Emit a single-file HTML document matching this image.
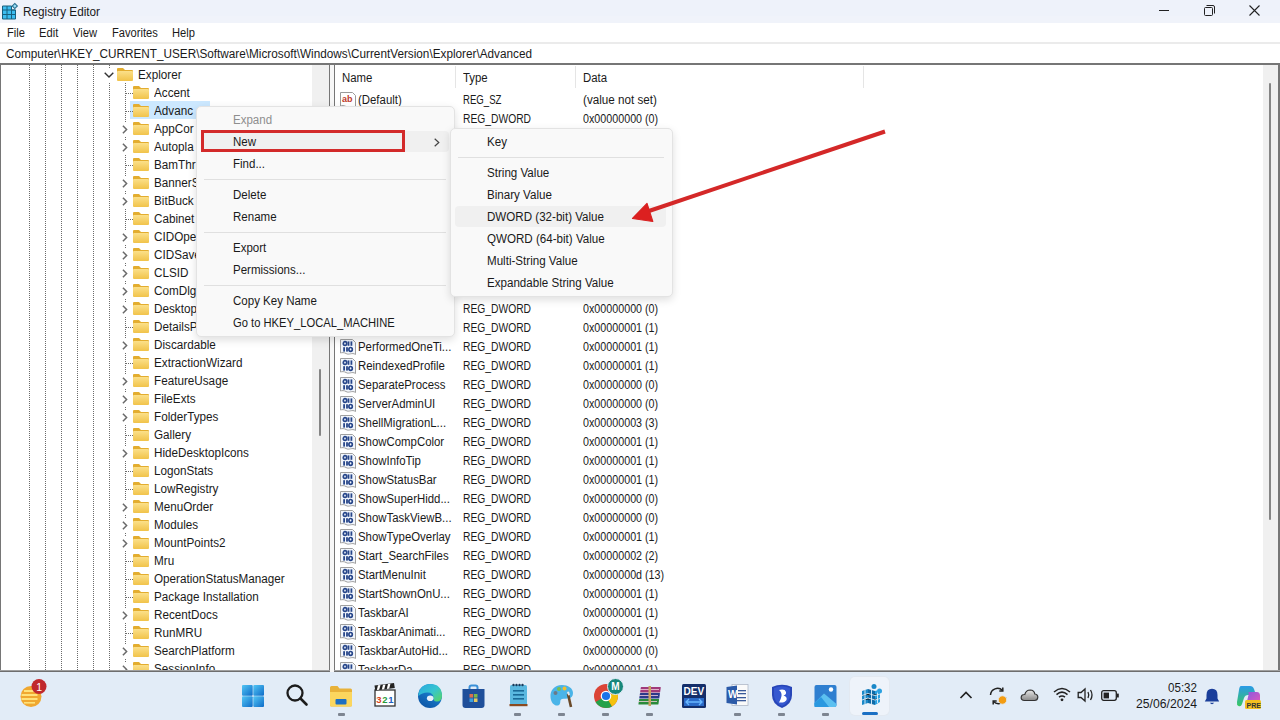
<!DOCTYPE html><html><head><meta charset="utf-8"><style>
html,body{margin:0;padding:0;}
body{width:1280px;height:720px;overflow:hidden;position:relative;background:#fff;font-family:"Liberation Sans", sans-serif;}
.t{position:absolute;white-space:nowrap;line-height:18px;height:18px;}
.a{position:absolute;}
svg{position:absolute;overflow:visible;}
</style></head><body>

<div class="a" style="left:0;top:0;width:1280px;height:23px;background:linear-gradient(to bottom,#eef2fa 0,#eef2fa 16px,#f0f3fa 16px,#f0f3fa 23px)"></div>
<svg style="left:2px;top:3px" width="16" height="17" viewBox="0 0 16 17">
<path d="M0.5 3 H9.5 V7 H13.5 V16 H0.5 Z" fill="#3cbdf0" stroke="#17607f" stroke-width="1"/>
<g stroke="#17607f" stroke-width="1"><path d="M0.5 7 H13.5 M0.5 11.5 H13.5 M5 3 V16 M9.5 3 V16"/></g>
<rect x="11" y="1.2" width="3.6" height="3.6" transform="rotate(45 12.8 3)" fill="#9be0f8" stroke="#2a7090" stroke-width="1.1"/>
</svg>
<div class="t" style="left:23px;top:2.5px;font-size:12px;color:#1a1a1a;transform:scaleX(0.9784);transform-origin:0 0;">Registry Editor</div>
<div class="a" style="left:1159px;top:10px;width:10px;height:1px;background:#222"></div>
<svg style="left:1204px;top:5px" width="11" height="11" viewBox="0 0 11 11"><rect x="0.5" y="2.5" width="8" height="8" rx="1" fill="none" stroke="#222" stroke-width="1"/><path d="M2.5 0.5 H9 a1.5 1.5 0 0 1 1.5 1.5 V8.5" fill="none" stroke="#222" stroke-width="1"/></svg>
<svg style="left:1249px;top:5px" width="11" height="11" viewBox="0 0 11 11"><path d="M0.5 0.5 L10.5 10.5 M10.5 0.5 L0.5 10.5" stroke="#222" stroke-width="1.1"/></svg>
<div class="t" style="left:7px;top:23.5px;font-size:12px;color:#1a1a1a;transform:scaleX(0.9300);transform-origin:0 0;">File</div>
<div class="t" style="left:39px;top:23.5px;font-size:12px;color:#1a1a1a;transform:scaleX(0.9300);transform-origin:0 0;">Edit</div>
<div class="t" style="left:73px;top:23.5px;font-size:12px;color:#1a1a1a;transform:scaleX(0.9300);transform-origin:0 0;">View</div>
<div class="t" style="left:112px;top:23.5px;font-size:12px;color:#1a1a1a;transform:scaleX(0.9300);transform-origin:0 0;">Favorites</div>
<div class="t" style="left:172px;top:23.5px;font-size:12px;color:#1a1a1a;transform:scaleX(0.9300);transform-origin:0 0;">Help</div>
<div class="a" style="left:0;top:42px;width:1280px;height:2px;background:#ebebeb"></div>
<div class="t" style="left:6px;top:44.5px;font-size:12px;color:#1a1a1a;transform:scaleX(0.9798);transform-origin:0 0;">Computer\HKEY_CURRENT_USER\Software\Microsoft\Windows\CurrentVersion\Explorer\Advanced</div>
<div class="a" style="left:0;top:63px;width:1280px;height:2px;background:#767676"></div>
<div class="a" style="left:0;top:63px;width:1px;height:609px;background:#767676"></div>
<div class="a" style="left:329px;top:63px;width:1px;height:609px;background:#767676"></div>
<div class="a" style="left:334px;top:63px;width:1px;height:609px;background:#767676"></div>
<div class="a" style="left:1278px;top:63px;width:2px;height:609px;background:#767676"></div>
<div class="a" style="left:0;top:670px;width:1280px;height:2px;background:linear-gradient(to bottom,#a0a0a0 0,#a0a0a0 1px,#6e6e6e 1px)"></div>
<div class="a" style="left:330px;top:65px;width:4px;height:607px;background:#f7f7f7"></div>
<div class="a" style="left:0;top:0;width:1280px;height:720px;clip-path:inset(65px 968px 50px 1px)">
<div class="a" style="left:29px;top:65px;width:1px;height:605px;background:repeating-linear-gradient(to bottom,#6a6a6a 0 1px,transparent 1px 2px)"></div>
<div class="a" style="left:45px;top:65px;width:1px;height:605px;background:repeating-linear-gradient(to bottom,#6a6a6a 0 1px,transparent 1px 2px)"></div>
<div class="a" style="left:61px;top:65px;width:1px;height:605px;background:repeating-linear-gradient(to bottom,#6a6a6a 0 1px,transparent 1px 2px)"></div>
<div class="a" style="left:77px;top:65px;width:1px;height:605px;background:repeating-linear-gradient(to bottom,#6a6a6a 0 1px,transparent 1px 2px)"></div>
<div class="a" style="left:93px;top:65px;width:1px;height:605px;background:repeating-linear-gradient(to bottom,#6a6a6a 0 1px,transparent 1px 2px)"></div>
<div class="a" style="left:109px;top:65px;width:1px;height:3px;background:repeating-linear-gradient(to bottom,#6a6a6a 0 1px,transparent 1px 2px)"></div>
<div class="a" style="left:109px;top:83px;width:1px;height:587px;background:repeating-linear-gradient(to bottom,#6a6a6a 0 1px,transparent 1px 2px)"></div>
<div class="a" style="left:125px;top:83px;width:1px;height:587px;background:repeating-linear-gradient(to bottom,#6a6a6a 0 1px,transparent 1px 2px)"></div>
<svg width="0" height="0" style="position:absolute"><defs><linearGradient id="fg" x1="0" y1="0" x2="0" y2="1"><stop offset="0" stop-color="#fbe08a"/><stop offset="1" stop-color="#f1c34a"/></linearGradient></defs></svg>
<svg style="left:104px;top:72px" width="10" height="6" viewBox="0 0 10 6"><path d="M0.7 0.7 L5 5 L9.3 0.7" fill="none" stroke="#333" stroke-width="1.4"/></svg>
<svg style="left:117px;top:68px" width="16" height="13" viewBox="0 0 16 13"><path d="M0 1 Q0 0 1 0 H6 L8 2 H15 Q16 2 16 3 V4 H0 Z" fill="#e3ad2f"/><rect x="0" y="3" width="16" height="10" rx="1" fill="url(#fg)"/></svg>
<div class="t" style="left:138px;top:65.5px;font-size:12px;color:#1a1a1a;transform:scaleX(0.9750);transform-origin:0 0;">Explorer</div>
<div class="a" style="left:130px;top:101px;width:80px;height:18px;background:#cce8ff"></div>
<div class="a" style="left:126px;top:93px;width:7px;height:1px;background:repeating-linear-gradient(to right,#6a6a6a 0 1px,transparent 1px 2px)"></div>
<svg style="left:133px;top:86px" width="16" height="13" viewBox="0 0 16 13"><path d="M0 1 Q0 0 1 0 H6 L8 2 H15 Q16 2 16 3 V4 H0 Z" fill="#e3ad2f"/><rect x="0" y="3" width="16" height="10" rx="1" fill="url(#fg)"/></svg>
<div class="t" style="left:154px;top:83.5px;font-size:12px;color:#1a1a1a;transform:scaleX(0.9750);transform-origin:0 0;">Accent</div>
<div class="a" style="left:126px;top:111px;width:7px;height:1px;background:repeating-linear-gradient(to right,#6a6a6a 0 1px,transparent 1px 2px)"></div>
<svg style="left:133px;top:104px" width="16" height="13" viewBox="0 0 16 13"><path d="M0 1 Q0 0 1 0 H6 L8 2 H15 Q16 2 16 3 V4 H0 Z" fill="#e3ad2f"/><rect x="0" y="3" width="16" height="10" rx="1" fill="url(#fg)"/></svg>
<div class="t" style="left:154px;top:101.5px;font-size:12px;color:#1a1a1a;transform:scaleX(0.9750);transform-origin:0 0;">Advanc</div>
<div class="a" style="left:121px;top:123px;width:8px;height:13px;background:#fff"></div>
<svg style="left:122px;top:125px" width="6" height="9" viewBox="0 0 6 9"><path d="M0.9 0.8 L4.6 4.5 L0.9 8.2" fill="none" stroke="#6a6a6a" stroke-width="1.5"/></svg>
<svg style="left:133px;top:122px" width="16" height="13" viewBox="0 0 16 13"><path d="M0 1 Q0 0 1 0 H6 L8 2 H15 Q16 2 16 3 V4 H0 Z" fill="#e3ad2f"/><rect x="0" y="3" width="16" height="10" rx="1" fill="url(#fg)"/></svg>
<div class="t" style="left:154px;top:119.5px;font-size:12px;color:#1a1a1a;transform:scaleX(0.9750);transform-origin:0 0;">AppCor</div>
<div class="a" style="left:121px;top:141px;width:8px;height:13px;background:#fff"></div>
<svg style="left:122px;top:143px" width="6" height="9" viewBox="0 0 6 9"><path d="M0.9 0.8 L4.6 4.5 L0.9 8.2" fill="none" stroke="#6a6a6a" stroke-width="1.5"/></svg>
<svg style="left:133px;top:140px" width="16" height="13" viewBox="0 0 16 13"><path d="M0 1 Q0 0 1 0 H6 L8 2 H15 Q16 2 16 3 V4 H0 Z" fill="#e3ad2f"/><rect x="0" y="3" width="16" height="10" rx="1" fill="url(#fg)"/></svg>
<div class="t" style="left:154px;top:137.5px;font-size:12px;color:#1a1a1a;transform:scaleX(0.9750);transform-origin:0 0;">Autopla</div>
<div class="a" style="left:126px;top:165px;width:7px;height:1px;background:repeating-linear-gradient(to right,#6a6a6a 0 1px,transparent 1px 2px)"></div>
<svg style="left:133px;top:158px" width="16" height="13" viewBox="0 0 16 13"><path d="M0 1 Q0 0 1 0 H6 L8 2 H15 Q16 2 16 3 V4 H0 Z" fill="#e3ad2f"/><rect x="0" y="3" width="16" height="10" rx="1" fill="url(#fg)"/></svg>
<div class="t" style="left:154px;top:155.5px;font-size:12px;color:#1a1a1a;transform:scaleX(0.9750);transform-origin:0 0;">BamThr</div>
<div class="a" style="left:121px;top:177px;width:8px;height:13px;background:#fff"></div>
<svg style="left:122px;top:179px" width="6" height="9" viewBox="0 0 6 9"><path d="M0.9 0.8 L4.6 4.5 L0.9 8.2" fill="none" stroke="#6a6a6a" stroke-width="1.5"/></svg>
<svg style="left:133px;top:176px" width="16" height="13" viewBox="0 0 16 13"><path d="M0 1 Q0 0 1 0 H6 L8 2 H15 Q16 2 16 3 V4 H0 Z" fill="#e3ad2f"/><rect x="0" y="3" width="16" height="10" rx="1" fill="url(#fg)"/></svg>
<div class="t" style="left:154px;top:173.5px;font-size:12px;color:#1a1a1a;transform:scaleX(0.9750);transform-origin:0 0;">BannerS</div>
<div class="a" style="left:121px;top:195px;width:8px;height:13px;background:#fff"></div>
<svg style="left:122px;top:197px" width="6" height="9" viewBox="0 0 6 9"><path d="M0.9 0.8 L4.6 4.5 L0.9 8.2" fill="none" stroke="#6a6a6a" stroke-width="1.5"/></svg>
<svg style="left:133px;top:194px" width="16" height="13" viewBox="0 0 16 13"><path d="M0 1 Q0 0 1 0 H6 L8 2 H15 Q16 2 16 3 V4 H0 Z" fill="#e3ad2f"/><rect x="0" y="3" width="16" height="10" rx="1" fill="url(#fg)"/></svg>
<div class="t" style="left:154px;top:191.5px;font-size:12px;color:#1a1a1a;transform:scaleX(0.9750);transform-origin:0 0;">BitBuck</div>
<div class="a" style="left:126px;top:219px;width:7px;height:1px;background:repeating-linear-gradient(to right,#6a6a6a 0 1px,transparent 1px 2px)"></div>
<svg style="left:133px;top:212px" width="16" height="13" viewBox="0 0 16 13"><path d="M0 1 Q0 0 1 0 H6 L8 2 H15 Q16 2 16 3 V4 H0 Z" fill="#e3ad2f"/><rect x="0" y="3" width="16" height="10" rx="1" fill="url(#fg)"/></svg>
<div class="t" style="left:154px;top:209.5px;font-size:12px;color:#1a1a1a;transform:scaleX(0.9750);transform-origin:0 0;">Cabinet</div>
<div class="a" style="left:121px;top:231px;width:8px;height:13px;background:#fff"></div>
<svg style="left:122px;top:233px" width="6" height="9" viewBox="0 0 6 9"><path d="M0.9 0.8 L4.6 4.5 L0.9 8.2" fill="none" stroke="#6a6a6a" stroke-width="1.5"/></svg>
<svg style="left:133px;top:230px" width="16" height="13" viewBox="0 0 16 13"><path d="M0 1 Q0 0 1 0 H6 L8 2 H15 Q16 2 16 3 V4 H0 Z" fill="#e3ad2f"/><rect x="0" y="3" width="16" height="10" rx="1" fill="url(#fg)"/></svg>
<div class="t" style="left:154px;top:227.5px;font-size:12px;color:#1a1a1a;transform:scaleX(0.9750);transform-origin:0 0;">CIDOpe</div>
<div class="a" style="left:121px;top:249px;width:8px;height:13px;background:#fff"></div>
<svg style="left:122px;top:251px" width="6" height="9" viewBox="0 0 6 9"><path d="M0.9 0.8 L4.6 4.5 L0.9 8.2" fill="none" stroke="#6a6a6a" stroke-width="1.5"/></svg>
<svg style="left:133px;top:248px" width="16" height="13" viewBox="0 0 16 13"><path d="M0 1 Q0 0 1 0 H6 L8 2 H15 Q16 2 16 3 V4 H0 Z" fill="#e3ad2f"/><rect x="0" y="3" width="16" height="10" rx="1" fill="url(#fg)"/></svg>
<div class="t" style="left:154px;top:245.5px;font-size:12px;color:#1a1a1a;transform:scaleX(0.9750);transform-origin:0 0;">CIDSave</div>
<div class="a" style="left:121px;top:267px;width:8px;height:13px;background:#fff"></div>
<svg style="left:122px;top:269px" width="6" height="9" viewBox="0 0 6 9"><path d="M0.9 0.8 L4.6 4.5 L0.9 8.2" fill="none" stroke="#6a6a6a" stroke-width="1.5"/></svg>
<svg style="left:133px;top:266px" width="16" height="13" viewBox="0 0 16 13"><path d="M0 1 Q0 0 1 0 H6 L8 2 H15 Q16 2 16 3 V4 H0 Z" fill="#e3ad2f"/><rect x="0" y="3" width="16" height="10" rx="1" fill="url(#fg)"/></svg>
<div class="t" style="left:154px;top:263.5px;font-size:12px;color:#1a1a1a;transform:scaleX(0.9750);transform-origin:0 0;">CLSID</div>
<div class="a" style="left:121px;top:285px;width:8px;height:13px;background:#fff"></div>
<svg style="left:122px;top:287px" width="6" height="9" viewBox="0 0 6 9"><path d="M0.9 0.8 L4.6 4.5 L0.9 8.2" fill="none" stroke="#6a6a6a" stroke-width="1.5"/></svg>
<svg style="left:133px;top:284px" width="16" height="13" viewBox="0 0 16 13"><path d="M0 1 Q0 0 1 0 H6 L8 2 H15 Q16 2 16 3 V4 H0 Z" fill="#e3ad2f"/><rect x="0" y="3" width="16" height="10" rx="1" fill="url(#fg)"/></svg>
<div class="t" style="left:154px;top:281.5px;font-size:12px;color:#1a1a1a;transform:scaleX(0.9750);transform-origin:0 0;">ComDlg</div>
<div class="a" style="left:121px;top:303px;width:8px;height:13px;background:#fff"></div>
<svg style="left:122px;top:305px" width="6" height="9" viewBox="0 0 6 9"><path d="M0.9 0.8 L4.6 4.5 L0.9 8.2" fill="none" stroke="#6a6a6a" stroke-width="1.5"/></svg>
<svg style="left:133px;top:302px" width="16" height="13" viewBox="0 0 16 13"><path d="M0 1 Q0 0 1 0 H6 L8 2 H15 Q16 2 16 3 V4 H0 Z" fill="#e3ad2f"/><rect x="0" y="3" width="16" height="10" rx="1" fill="url(#fg)"/></svg>
<div class="t" style="left:154px;top:299.5px;font-size:12px;color:#1a1a1a;transform:scaleX(0.9750);transform-origin:0 0;">Desktop</div>
<div class="a" style="left:126px;top:327px;width:7px;height:1px;background:repeating-linear-gradient(to right,#6a6a6a 0 1px,transparent 1px 2px)"></div>
<svg style="left:133px;top:320px" width="16" height="13" viewBox="0 0 16 13"><path d="M0 1 Q0 0 1 0 H6 L8 2 H15 Q16 2 16 3 V4 H0 Z" fill="#e3ad2f"/><rect x="0" y="3" width="16" height="10" rx="1" fill="url(#fg)"/></svg>
<div class="t" style="left:154px;top:317.5px;font-size:12px;color:#1a1a1a;transform:scaleX(0.9750);transform-origin:0 0;">DetailsP</div>
<div class="a" style="left:121px;top:339px;width:8px;height:13px;background:#fff"></div>
<svg style="left:122px;top:341px" width="6" height="9" viewBox="0 0 6 9"><path d="M0.9 0.8 L4.6 4.5 L0.9 8.2" fill="none" stroke="#6a6a6a" stroke-width="1.5"/></svg>
<svg style="left:133px;top:338px" width="16" height="13" viewBox="0 0 16 13"><path d="M0 1 Q0 0 1 0 H6 L8 2 H15 Q16 2 16 3 V4 H0 Z" fill="#e3ad2f"/><rect x="0" y="3" width="16" height="10" rx="1" fill="url(#fg)"/></svg>
<div class="t" style="left:154px;top:335.5px;font-size:12px;color:#1a1a1a;transform:scaleX(0.9750);transform-origin:0 0;">Discardable</div>
<div class="a" style="left:126px;top:363px;width:7px;height:1px;background:repeating-linear-gradient(to right,#6a6a6a 0 1px,transparent 1px 2px)"></div>
<svg style="left:133px;top:356px" width="16" height="13" viewBox="0 0 16 13"><path d="M0 1 Q0 0 1 0 H6 L8 2 H15 Q16 2 16 3 V4 H0 Z" fill="#e3ad2f"/><rect x="0" y="3" width="16" height="10" rx="1" fill="url(#fg)"/></svg>
<div class="t" style="left:154px;top:353.5px;font-size:12px;color:#1a1a1a;transform:scaleX(0.9750);transform-origin:0 0;">ExtractionWizard</div>
<div class="a" style="left:121px;top:375px;width:8px;height:13px;background:#fff"></div>
<svg style="left:122px;top:377px" width="6" height="9" viewBox="0 0 6 9"><path d="M0.9 0.8 L4.6 4.5 L0.9 8.2" fill="none" stroke="#6a6a6a" stroke-width="1.5"/></svg>
<svg style="left:133px;top:374px" width="16" height="13" viewBox="0 0 16 13"><path d="M0 1 Q0 0 1 0 H6 L8 2 H15 Q16 2 16 3 V4 H0 Z" fill="#e3ad2f"/><rect x="0" y="3" width="16" height="10" rx="1" fill="url(#fg)"/></svg>
<div class="t" style="left:154px;top:371.5px;font-size:12px;color:#1a1a1a;transform:scaleX(0.9750);transform-origin:0 0;">FeatureUsage</div>
<div class="a" style="left:121px;top:393px;width:8px;height:13px;background:#fff"></div>
<svg style="left:122px;top:395px" width="6" height="9" viewBox="0 0 6 9"><path d="M0.9 0.8 L4.6 4.5 L0.9 8.2" fill="none" stroke="#6a6a6a" stroke-width="1.5"/></svg>
<svg style="left:133px;top:392px" width="16" height="13" viewBox="0 0 16 13"><path d="M0 1 Q0 0 1 0 H6 L8 2 H15 Q16 2 16 3 V4 H0 Z" fill="#e3ad2f"/><rect x="0" y="3" width="16" height="10" rx="1" fill="url(#fg)"/></svg>
<div class="t" style="left:154px;top:389.5px;font-size:12px;color:#1a1a1a;transform:scaleX(0.9750);transform-origin:0 0;">FileExts</div>
<div class="a" style="left:121px;top:411px;width:8px;height:13px;background:#fff"></div>
<svg style="left:122px;top:413px" width="6" height="9" viewBox="0 0 6 9"><path d="M0.9 0.8 L4.6 4.5 L0.9 8.2" fill="none" stroke="#6a6a6a" stroke-width="1.5"/></svg>
<svg style="left:133px;top:410px" width="16" height="13" viewBox="0 0 16 13"><path d="M0 1 Q0 0 1 0 H6 L8 2 H15 Q16 2 16 3 V4 H0 Z" fill="#e3ad2f"/><rect x="0" y="3" width="16" height="10" rx="1" fill="url(#fg)"/></svg>
<div class="t" style="left:154px;top:407.5px;font-size:12px;color:#1a1a1a;transform:scaleX(0.9750);transform-origin:0 0;">FolderTypes</div>
<div class="a" style="left:126px;top:435px;width:7px;height:1px;background:repeating-linear-gradient(to right,#6a6a6a 0 1px,transparent 1px 2px)"></div>
<svg style="left:133px;top:428px" width="16" height="13" viewBox="0 0 16 13"><path d="M0 1 Q0 0 1 0 H6 L8 2 H15 Q16 2 16 3 V4 H0 Z" fill="#e3ad2f"/><rect x="0" y="3" width="16" height="10" rx="1" fill="url(#fg)"/></svg>
<div class="t" style="left:154px;top:425.5px;font-size:12px;color:#1a1a1a;transform:scaleX(0.9750);transform-origin:0 0;">Gallery</div>
<div class="a" style="left:121px;top:447px;width:8px;height:13px;background:#fff"></div>
<svg style="left:122px;top:449px" width="6" height="9" viewBox="0 0 6 9"><path d="M0.9 0.8 L4.6 4.5 L0.9 8.2" fill="none" stroke="#6a6a6a" stroke-width="1.5"/></svg>
<svg style="left:133px;top:446px" width="16" height="13" viewBox="0 0 16 13"><path d="M0 1 Q0 0 1 0 H6 L8 2 H15 Q16 2 16 3 V4 H0 Z" fill="#e3ad2f"/><rect x="0" y="3" width="16" height="10" rx="1" fill="url(#fg)"/></svg>
<div class="t" style="left:154px;top:443.5px;font-size:12px;color:#1a1a1a;transform:scaleX(0.9750);transform-origin:0 0;">HideDesktopIcons</div>
<div class="a" style="left:126px;top:471px;width:7px;height:1px;background:repeating-linear-gradient(to right,#6a6a6a 0 1px,transparent 1px 2px)"></div>
<svg style="left:133px;top:464px" width="16" height="13" viewBox="0 0 16 13"><path d="M0 1 Q0 0 1 0 H6 L8 2 H15 Q16 2 16 3 V4 H0 Z" fill="#e3ad2f"/><rect x="0" y="3" width="16" height="10" rx="1" fill="url(#fg)"/></svg>
<div class="t" style="left:154px;top:461.5px;font-size:12px;color:#1a1a1a;transform:scaleX(0.9750);transform-origin:0 0;">LogonStats</div>
<div class="a" style="left:126px;top:489px;width:7px;height:1px;background:repeating-linear-gradient(to right,#6a6a6a 0 1px,transparent 1px 2px)"></div>
<svg style="left:133px;top:482px" width="16" height="13" viewBox="0 0 16 13"><path d="M0 1 Q0 0 1 0 H6 L8 2 H15 Q16 2 16 3 V4 H0 Z" fill="#e3ad2f"/><rect x="0" y="3" width="16" height="10" rx="1" fill="url(#fg)"/></svg>
<div class="t" style="left:154px;top:479.5px;font-size:12px;color:#1a1a1a;transform:scaleX(0.9750);transform-origin:0 0;">LowRegistry</div>
<div class="a" style="left:121px;top:501px;width:8px;height:13px;background:#fff"></div>
<svg style="left:122px;top:503px" width="6" height="9" viewBox="0 0 6 9"><path d="M0.9 0.8 L4.6 4.5 L0.9 8.2" fill="none" stroke="#6a6a6a" stroke-width="1.5"/></svg>
<svg style="left:133px;top:500px" width="16" height="13" viewBox="0 0 16 13"><path d="M0 1 Q0 0 1 0 H6 L8 2 H15 Q16 2 16 3 V4 H0 Z" fill="#e3ad2f"/><rect x="0" y="3" width="16" height="10" rx="1" fill="url(#fg)"/></svg>
<div class="t" style="left:154px;top:497.5px;font-size:12px;color:#1a1a1a;transform:scaleX(0.9750);transform-origin:0 0;">MenuOrder</div>
<div class="a" style="left:121px;top:519px;width:8px;height:13px;background:#fff"></div>
<svg style="left:122px;top:521px" width="6" height="9" viewBox="0 0 6 9"><path d="M0.9 0.8 L4.6 4.5 L0.9 8.2" fill="none" stroke="#6a6a6a" stroke-width="1.5"/></svg>
<svg style="left:133px;top:518px" width="16" height="13" viewBox="0 0 16 13"><path d="M0 1 Q0 0 1 0 H6 L8 2 H15 Q16 2 16 3 V4 H0 Z" fill="#e3ad2f"/><rect x="0" y="3" width="16" height="10" rx="1" fill="url(#fg)"/></svg>
<div class="t" style="left:154px;top:515.5px;font-size:12px;color:#1a1a1a;transform:scaleX(0.9750);transform-origin:0 0;">Modules</div>
<div class="a" style="left:121px;top:537px;width:8px;height:13px;background:#fff"></div>
<svg style="left:122px;top:539px" width="6" height="9" viewBox="0 0 6 9"><path d="M0.9 0.8 L4.6 4.5 L0.9 8.2" fill="none" stroke="#6a6a6a" stroke-width="1.5"/></svg>
<svg style="left:133px;top:536px" width="16" height="13" viewBox="0 0 16 13"><path d="M0 1 Q0 0 1 0 H6 L8 2 H15 Q16 2 16 3 V4 H0 Z" fill="#e3ad2f"/><rect x="0" y="3" width="16" height="10" rx="1" fill="url(#fg)"/></svg>
<div class="t" style="left:154px;top:533.5px;font-size:12px;color:#1a1a1a;transform:scaleX(0.9750);transform-origin:0 0;">MountPoints2</div>
<div class="a" style="left:126px;top:561px;width:7px;height:1px;background:repeating-linear-gradient(to right,#6a6a6a 0 1px,transparent 1px 2px)"></div>
<svg style="left:133px;top:554px" width="16" height="13" viewBox="0 0 16 13"><path d="M0 1 Q0 0 1 0 H6 L8 2 H15 Q16 2 16 3 V4 H0 Z" fill="#e3ad2f"/><rect x="0" y="3" width="16" height="10" rx="1" fill="url(#fg)"/></svg>
<div class="t" style="left:154px;top:551.5px;font-size:12px;color:#1a1a1a;transform:scaleX(0.9750);transform-origin:0 0;">Mru</div>
<div class="a" style="left:126px;top:579px;width:7px;height:1px;background:repeating-linear-gradient(to right,#6a6a6a 0 1px,transparent 1px 2px)"></div>
<svg style="left:133px;top:572px" width="16" height="13" viewBox="0 0 16 13"><path d="M0 1 Q0 0 1 0 H6 L8 2 H15 Q16 2 16 3 V4 H0 Z" fill="#e3ad2f"/><rect x="0" y="3" width="16" height="10" rx="1" fill="url(#fg)"/></svg>
<div class="t" style="left:154px;top:569.5px;font-size:12px;color:#1a1a1a;transform:scaleX(0.9750);transform-origin:0 0;">OperationStatusManager</div>
<div class="a" style="left:126px;top:597px;width:7px;height:1px;background:repeating-linear-gradient(to right,#6a6a6a 0 1px,transparent 1px 2px)"></div>
<svg style="left:133px;top:590px" width="16" height="13" viewBox="0 0 16 13"><path d="M0 1 Q0 0 1 0 H6 L8 2 H15 Q16 2 16 3 V4 H0 Z" fill="#e3ad2f"/><rect x="0" y="3" width="16" height="10" rx="1" fill="url(#fg)"/></svg>
<div class="t" style="left:154px;top:587.5px;font-size:12px;color:#1a1a1a;transform:scaleX(0.9750);transform-origin:0 0;">Package Installation</div>
<div class="a" style="left:121px;top:609px;width:8px;height:13px;background:#fff"></div>
<svg style="left:122px;top:611px" width="6" height="9" viewBox="0 0 6 9"><path d="M0.9 0.8 L4.6 4.5 L0.9 8.2" fill="none" stroke="#6a6a6a" stroke-width="1.5"/></svg>
<svg style="left:133px;top:608px" width="16" height="13" viewBox="0 0 16 13"><path d="M0 1 Q0 0 1 0 H6 L8 2 H15 Q16 2 16 3 V4 H0 Z" fill="#e3ad2f"/><rect x="0" y="3" width="16" height="10" rx="1" fill="url(#fg)"/></svg>
<div class="t" style="left:154px;top:605.5px;font-size:12px;color:#1a1a1a;transform:scaleX(0.9750);transform-origin:0 0;">RecentDocs</div>
<div class="a" style="left:126px;top:633px;width:7px;height:1px;background:repeating-linear-gradient(to right,#6a6a6a 0 1px,transparent 1px 2px)"></div>
<svg style="left:133px;top:626px" width="16" height="13" viewBox="0 0 16 13"><path d="M0 1 Q0 0 1 0 H6 L8 2 H15 Q16 2 16 3 V4 H0 Z" fill="#e3ad2f"/><rect x="0" y="3" width="16" height="10" rx="1" fill="url(#fg)"/></svg>
<div class="t" style="left:154px;top:623.5px;font-size:12px;color:#1a1a1a;transform:scaleX(0.9750);transform-origin:0 0;">RunMRU</div>
<div class="a" style="left:121px;top:645px;width:8px;height:13px;background:#fff"></div>
<svg style="left:122px;top:647px" width="6" height="9" viewBox="0 0 6 9"><path d="M0.9 0.8 L4.6 4.5 L0.9 8.2" fill="none" stroke="#6a6a6a" stroke-width="1.5"/></svg>
<svg style="left:133px;top:644px" width="16" height="13" viewBox="0 0 16 13"><path d="M0 1 Q0 0 1 0 H6 L8 2 H15 Q16 2 16 3 V4 H0 Z" fill="#e3ad2f"/><rect x="0" y="3" width="16" height="10" rx="1" fill="url(#fg)"/></svg>
<div class="t" style="left:154px;top:641.5px;font-size:12px;color:#1a1a1a;transform:scaleX(0.9750);transform-origin:0 0;">SearchPlatform</div>
<div class="a" style="left:121px;top:663px;width:8px;height:13px;background:#fff"></div>
<svg style="left:122px;top:665px" width="6" height="9" viewBox="0 0 6 9"><path d="M0.9 0.8 L4.6 4.5 L0.9 8.2" fill="none" stroke="#6a6a6a" stroke-width="1.5"/></svg>
<svg style="left:133px;top:662px" width="16" height="13" viewBox="0 0 16 13"><path d="M0 1 Q0 0 1 0 H6 L8 2 H15 Q16 2 16 3 V4 H0 Z" fill="#e3ad2f"/><rect x="0" y="3" width="16" height="10" rx="1" fill="url(#fg)"/></svg>
<div class="t" style="left:154px;top:659.5px;font-size:12px;color:#1a1a1a;transform:scaleX(0.9750);transform-origin:0 0;">SessionInfo</div>
</div>
<div class="a" style="left:312px;top:65px;width:17px;height:605px;background:#f0f0f0"></div>
<div class="a" style="left:319px;top:369px;width:2px;height:67px;background:#858585;border-radius:1px"></div>
<div class="a" style="left:0;top:0;width:1280px;height:720px;clip-path:inset(65px 18px 50px 335px)">
<div class="a" style="left:455px;top:66px;width:1px;height:22px;background:#e5e5e5"></div>
<div class="a" style="left:575px;top:66px;width:1px;height:22px;background:#e5e5e5"></div>
<div class="a" style="left:863px;top:66px;width:1px;height:22px;background:#e5e5e5"></div>
<div class="t" style="left:342px;top:68.5px;font-size:12px;color:#1a1a1a;transform:scaleX(0.9500);transform-origin:0 0;">Name</div>
<div class="t" style="left:463px;top:68.5px;font-size:12px;color:#1a1a1a;transform:scaleX(0.9500);transform-origin:0 0;">Type</div>
<div class="t" style="left:583px;top:68.5px;font-size:12px;color:#1a1a1a;transform:scaleX(0.9500);transform-origin:0 0;">Data</div>
<svg style="left:340px;top:92px" width="16" height="16" viewBox="0 0 16 16"><path d="M0.5 0.5 H12.5 L15.5 3.5 V15.5 C12 13 9 16.5 6 14.5 C4 13.3 2 13.5 0.5 14 Z" fill="#fff" stroke="#9a9a9a" stroke-width="1"/><text x="2" y="10" font-family="Liberation Sans" font-weight="bold" font-size="9" fill="#c0392b">ab</text></svg>
<div class="t" style="left:358px;top:90.5px;font-size:12px;color:#1a1a1a;transform:scaleX(0.9500);transform-origin:0 0;">(Default)</div>
<div class="t" style="left:462.5px;top:90.5px;font-size:12px;color:#1a1a1a;transform:scaleX(0.8000);transform-origin:0 0;">REG_SZ</div>
<div class="t" style="left:582.5px;top:90.5px;font-size:12px;color:#1a1a1a;transform:scaleX(0.9730);transform-origin:0 0;">(value not set)</div>
<svg style="left:340px;top:111px" width="16" height="16" viewBox="0 0 16 16"><path d="M0.5 0.5 H12.5 L15.5 3.5 V15.5 C12 13 9 16.5 6 14.5 C4 13.3 2 13.5 0.5 14 Z" fill="#f2f6fc" stroke="#a0a0a0" stroke-width="1"/><g fill="none" stroke="#27468a" stroke-width="1.7"><ellipse cx="5" cy="4.6" rx="1.7" ry="1.9"/><ellipse cx="10.6" cy="10.4" rx="1.7" ry="1.9"/></g><g fill="#27468a"><rect x="7.6" y="2.4" width="1.8" height="4.4"/><rect x="10.5" y="2.4" width="1.8" height="4.4"/><rect x="3.2" y="8.2" width="1.8" height="4.4"/><rect x="6.1" y="8.2" width="1.8" height="4.4"/></g></svg>
<div class="t" style="left:358px;top:109.5px;font-size:12px;color:#1a1a1a;transform:scaleX(0.9500);transform-origin:0 0;">AutoCheckSelect</div>
<div class="t" style="left:462.5px;top:109.5px;font-size:12px;color:#1a1a1a;transform:scaleX(0.8570);transform-origin:0 0;">REG_DWORD</div>
<div class="t" style="left:582.5px;top:109.5px;font-size:12px;color:#1a1a1a;transform:scaleX(0.8940);transform-origin:0 0;">0x00000000 (0)</div>
<svg style="left:340px;top:130px" width="16" height="16" viewBox="0 0 16 16"><path d="M0.5 0.5 H12.5 L15.5 3.5 V15.5 C12 13 9 16.5 6 14.5 C4 13.3 2 13.5 0.5 14 Z" fill="#f2f6fc" stroke="#a0a0a0" stroke-width="1"/><g fill="none" stroke="#27468a" stroke-width="1.7"><ellipse cx="5" cy="4.6" rx="1.7" ry="1.9"/><ellipse cx="10.6" cy="10.4" rx="1.7" ry="1.9"/></g><g fill="#27468a"><rect x="7.6" y="2.4" width="1.8" height="4.4"/><rect x="10.5" y="2.4" width="1.8" height="4.4"/><rect x="3.2" y="8.2" width="1.8" height="4.4"/><rect x="6.1" y="8.2" width="1.8" height="4.4"/></g></svg>
<div class="t" style="left:358px;top:128.5px;font-size:12px;color:#1a1a1a;transform:scaleX(0.9500);transform-origin:0 0;">DisablePreviewDesktop</div>
<div class="t" style="left:462.5px;top:128.5px;font-size:12px;color:#1a1a1a;transform:scaleX(0.8570);transform-origin:0 0;">REG_DWORD</div>
<div class="t" style="left:582.5px;top:128.5px;font-size:12px;color:#1a1a1a;transform:scaleX(0.8940);transform-origin:0 0;">0x00000000 (0)</div>
<svg style="left:340px;top:149px" width="16" height="16" viewBox="0 0 16 16"><path d="M0.5 0.5 H12.5 L15.5 3.5 V15.5 C12 13 9 16.5 6 14.5 C4 13.3 2 13.5 0.5 14 Z" fill="#f2f6fc" stroke="#a0a0a0" stroke-width="1"/><g fill="none" stroke="#27468a" stroke-width="1.7"><ellipse cx="5" cy="4.6" rx="1.7" ry="1.9"/><ellipse cx="10.6" cy="10.4" rx="1.7" ry="1.9"/></g><g fill="#27468a"><rect x="7.6" y="2.4" width="1.8" height="4.4"/><rect x="10.5" y="2.4" width="1.8" height="4.4"/><rect x="3.2" y="8.2" width="1.8" height="4.4"/><rect x="6.1" y="8.2" width="1.8" height="4.4"/></g></svg>
<div class="t" style="left:358px;top:147.5px;font-size:12px;color:#1a1a1a;transform:scaleX(0.9500);transform-origin:0 0;">DontPrettyPath</div>
<div class="t" style="left:462.5px;top:147.5px;font-size:12px;color:#1a1a1a;transform:scaleX(0.8570);transform-origin:0 0;">REG_DWORD</div>
<div class="t" style="left:582.5px;top:147.5px;font-size:12px;color:#1a1a1a;transform:scaleX(0.8940);transform-origin:0 0;">0x00000000 (0)</div>
<svg style="left:340px;top:168px" width="16" height="16" viewBox="0 0 16 16"><path d="M0.5 0.5 H12.5 L15.5 3.5 V15.5 C12 13 9 16.5 6 14.5 C4 13.3 2 13.5 0.5 14 Z" fill="#f2f6fc" stroke="#a0a0a0" stroke-width="1"/><g fill="none" stroke="#27468a" stroke-width="1.7"><ellipse cx="5" cy="4.6" rx="1.7" ry="1.9"/><ellipse cx="10.6" cy="10.4" rx="1.7" ry="1.9"/></g><g fill="#27468a"><rect x="7.6" y="2.4" width="1.8" height="4.4"/><rect x="10.5" y="2.4" width="1.8" height="4.4"/><rect x="3.2" y="8.2" width="1.8" height="4.4"/><rect x="6.1" y="8.2" width="1.8" height="4.4"/></g></svg>
<div class="t" style="left:358px;top:166.5px;font-size:12px;color:#1a1a1a;transform:scaleX(0.9500);transform-origin:0 0;">Filter</div>
<div class="t" style="left:462.5px;top:166.5px;font-size:12px;color:#1a1a1a;transform:scaleX(0.8570);transform-origin:0 0;">REG_DWORD</div>
<div class="t" style="left:582.5px;top:166.5px;font-size:12px;color:#1a1a1a;transform:scaleX(0.8940);transform-origin:0 0;">0x00000000 (0)</div>
<svg style="left:340px;top:187px" width="16" height="16" viewBox="0 0 16 16"><path d="M0.5 0.5 H12.5 L15.5 3.5 V15.5 C12 13 9 16.5 6 14.5 C4 13.3 2 13.5 0.5 14 Z" fill="#f2f6fc" stroke="#a0a0a0" stroke-width="1"/><g fill="none" stroke="#27468a" stroke-width="1.7"><ellipse cx="5" cy="4.6" rx="1.7" ry="1.9"/><ellipse cx="10.6" cy="10.4" rx="1.7" ry="1.9"/></g><g fill="#27468a"><rect x="7.6" y="2.4" width="1.8" height="4.4"/><rect x="10.5" y="2.4" width="1.8" height="4.4"/><rect x="3.2" y="8.2" width="1.8" height="4.4"/><rect x="6.1" y="8.2" width="1.8" height="4.4"/></g></svg>
<div class="t" style="left:358px;top:185.5px;font-size:12px;color:#1a1a1a;transform:scaleX(0.9500);transform-origin:0 0;">Hidden</div>
<div class="t" style="left:462.5px;top:185.5px;font-size:12px;color:#1a1a1a;transform:scaleX(0.8570);transform-origin:0 0;">REG_DWORD</div>
<div class="t" style="left:582.5px;top:185.5px;font-size:12px;color:#1a1a1a;transform:scaleX(0.8940);transform-origin:0 0;">0x00000001 (1)</div>
<svg style="left:340px;top:206px" width="16" height="16" viewBox="0 0 16 16"><path d="M0.5 0.5 H12.5 L15.5 3.5 V15.5 C12 13 9 16.5 6 14.5 C4 13.3 2 13.5 0.5 14 Z" fill="#f2f6fc" stroke="#a0a0a0" stroke-width="1"/><g fill="none" stroke="#27468a" stroke-width="1.7"><ellipse cx="5" cy="4.6" rx="1.7" ry="1.9"/><ellipse cx="10.6" cy="10.4" rx="1.7" ry="1.9"/></g><g fill="#27468a"><rect x="7.6" y="2.4" width="1.8" height="4.4"/><rect x="10.5" y="2.4" width="1.8" height="4.4"/><rect x="3.2" y="8.2" width="1.8" height="4.4"/><rect x="6.1" y="8.2" width="1.8" height="4.4"/></g></svg>
<div class="t" style="left:358px;top:204.5px;font-size:12px;color:#1a1a1a;transform:scaleX(0.9500);transform-origin:0 0;">HideFileExt</div>
<div class="t" style="left:462.5px;top:204.5px;font-size:12px;color:#1a1a1a;transform:scaleX(0.8570);transform-origin:0 0;">REG_DWORD</div>
<div class="t" style="left:582.5px;top:204.5px;font-size:12px;color:#1a1a1a;transform:scaleX(0.8940);transform-origin:0 0;">0x00000000 (0)</div>
<svg style="left:340px;top:225px" width="16" height="16" viewBox="0 0 16 16"><path d="M0.5 0.5 H12.5 L15.5 3.5 V15.5 C12 13 9 16.5 6 14.5 C4 13.3 2 13.5 0.5 14 Z" fill="#f2f6fc" stroke="#a0a0a0" stroke-width="1"/><g fill="none" stroke="#27468a" stroke-width="1.7"><ellipse cx="5" cy="4.6" rx="1.7" ry="1.9"/><ellipse cx="10.6" cy="10.4" rx="1.7" ry="1.9"/></g><g fill="#27468a"><rect x="7.6" y="2.4" width="1.8" height="4.4"/><rect x="10.5" y="2.4" width="1.8" height="4.4"/><rect x="3.2" y="8.2" width="1.8" height="4.4"/><rect x="6.1" y="8.2" width="1.8" height="4.4"/></g></svg>
<div class="t" style="left:358px;top:223.5px;font-size:12px;color:#1a1a1a;transform:scaleX(0.9500);transform-origin:0 0;">HideIcons</div>
<div class="t" style="left:462.5px;top:223.5px;font-size:12px;color:#1a1a1a;transform:scaleX(0.8570);transform-origin:0 0;">REG_DWORD</div>
<div class="t" style="left:582.5px;top:223.5px;font-size:12px;color:#1a1a1a;transform:scaleX(0.8940);transform-origin:0 0;">0x00000000 (0)</div>
<svg style="left:340px;top:244px" width="16" height="16" viewBox="0 0 16 16"><path d="M0.5 0.5 H12.5 L15.5 3.5 V15.5 C12 13 9 16.5 6 14.5 C4 13.3 2 13.5 0.5 14 Z" fill="#f2f6fc" stroke="#a0a0a0" stroke-width="1"/><g fill="none" stroke="#27468a" stroke-width="1.7"><ellipse cx="5" cy="4.6" rx="1.7" ry="1.9"/><ellipse cx="10.6" cy="10.4" rx="1.7" ry="1.9"/></g><g fill="#27468a"><rect x="7.6" y="2.4" width="1.8" height="4.4"/><rect x="10.5" y="2.4" width="1.8" height="4.4"/><rect x="3.2" y="8.2" width="1.8" height="4.4"/><rect x="6.1" y="8.2" width="1.8" height="4.4"/></g></svg>
<div class="t" style="left:358px;top:242.5px;font-size:12px;color:#1a1a1a;transform:scaleX(0.9500);transform-origin:0 0;">IconsOnly</div>
<div class="t" style="left:462.5px;top:242.5px;font-size:12px;color:#1a1a1a;transform:scaleX(0.8570);transform-origin:0 0;">REG_DWORD</div>
<div class="t" style="left:582.5px;top:242.5px;font-size:12px;color:#1a1a1a;transform:scaleX(0.8940);transform-origin:0 0;">0x00000000 (0)</div>
<svg style="left:340px;top:263px" width="16" height="16" viewBox="0 0 16 16"><path d="M0.5 0.5 H12.5 L15.5 3.5 V15.5 C12 13 9 16.5 6 14.5 C4 13.3 2 13.5 0.5 14 Z" fill="#f2f6fc" stroke="#a0a0a0" stroke-width="1"/><g fill="none" stroke="#27468a" stroke-width="1.7"><ellipse cx="5" cy="4.6" rx="1.7" ry="1.9"/><ellipse cx="10.6" cy="10.4" rx="1.7" ry="1.9"/></g><g fill="#27468a"><rect x="7.6" y="2.4" width="1.8" height="4.4"/><rect x="10.5" y="2.4" width="1.8" height="4.4"/><rect x="3.2" y="8.2" width="1.8" height="4.4"/><rect x="6.1" y="8.2" width="1.8" height="4.4"/></g></svg>
<div class="t" style="left:358px;top:261.5px;font-size:12px;color:#1a1a1a;transform:scaleX(0.9500);transform-origin:0 0;">ListviewAlphaSelect</div>
<div class="t" style="left:462.5px;top:261.5px;font-size:12px;color:#1a1a1a;transform:scaleX(0.8570);transform-origin:0 0;">REG_DWORD</div>
<div class="t" style="left:582.5px;top:261.5px;font-size:12px;color:#1a1a1a;transform:scaleX(0.8940);transform-origin:0 0;">0x00000001 (1)</div>
<svg style="left:340px;top:282px" width="16" height="16" viewBox="0 0 16 16"><path d="M0.5 0.5 H12.5 L15.5 3.5 V15.5 C12 13 9 16.5 6 14.5 C4 13.3 2 13.5 0.5 14 Z" fill="#f2f6fc" stroke="#a0a0a0" stroke-width="1"/><g fill="none" stroke="#27468a" stroke-width="1.7"><ellipse cx="5" cy="4.6" rx="1.7" ry="1.9"/><ellipse cx="10.6" cy="10.4" rx="1.7" ry="1.9"/></g><g fill="#27468a"><rect x="7.6" y="2.4" width="1.8" height="4.4"/><rect x="10.5" y="2.4" width="1.8" height="4.4"/><rect x="3.2" y="8.2" width="1.8" height="4.4"/><rect x="6.1" y="8.2" width="1.8" height="4.4"/></g></svg>
<div class="t" style="left:358px;top:280.5px;font-size:12px;color:#1a1a1a;transform:scaleX(0.9500);transform-origin:0 0;">ListviewShadow</div>
<div class="t" style="left:462.5px;top:280.5px;font-size:12px;color:#1a1a1a;transform:scaleX(0.8570);transform-origin:0 0;">REG_DWORD</div>
<div class="t" style="left:582.5px;top:280.5px;font-size:12px;color:#1a1a1a;transform:scaleX(0.8940);transform-origin:0 0;">0x00000001 (1)</div>
<svg style="left:340px;top:301px" width="16" height="16" viewBox="0 0 16 16"><path d="M0.5 0.5 H12.5 L15.5 3.5 V15.5 C12 13 9 16.5 6 14.5 C4 13.3 2 13.5 0.5 14 Z" fill="#f2f6fc" stroke="#a0a0a0" stroke-width="1"/><g fill="none" stroke="#27468a" stroke-width="1.7"><ellipse cx="5" cy="4.6" rx="1.7" ry="1.9"/><ellipse cx="10.6" cy="10.4" rx="1.7" ry="1.9"/></g><g fill="#27468a"><rect x="7.6" y="2.4" width="1.8" height="4.4"/><rect x="10.5" y="2.4" width="1.8" height="4.4"/><rect x="3.2" y="8.2" width="1.8" height="4.4"/><rect x="6.1" y="8.2" width="1.8" height="4.4"/></g></svg>
<div class="t" style="left:358px;top:299.5px;font-size:12px;color:#1a1a1a;transform:scaleX(0.9500);transform-origin:0 0;">MapNetDrvBtn</div>
<div class="t" style="left:462.5px;top:299.5px;font-size:12px;color:#1a1a1a;transform:scaleX(0.8570);transform-origin:0 0;">REG_DWORD</div>
<div class="t" style="left:582.5px;top:299.5px;font-size:12px;color:#1a1a1a;transform:scaleX(0.8940);transform-origin:0 0;">0x00000000 (0)</div>
<svg style="left:340px;top:320px" width="16" height="16" viewBox="0 0 16 16"><path d="M0.5 0.5 H12.5 L15.5 3.5 V15.5 C12 13 9 16.5 6 14.5 C4 13.3 2 13.5 0.5 14 Z" fill="#f2f6fc" stroke="#a0a0a0" stroke-width="1"/><g fill="none" stroke="#27468a" stroke-width="1.7"><ellipse cx="5" cy="4.6" rx="1.7" ry="1.9"/><ellipse cx="10.6" cy="10.4" rx="1.7" ry="1.9"/></g><g fill="#27468a"><rect x="7.6" y="2.4" width="1.8" height="4.4"/><rect x="10.5" y="2.4" width="1.8" height="4.4"/><rect x="3.2" y="8.2" width="1.8" height="4.4"/><rect x="6.1" y="8.2" width="1.8" height="4.4"/></g></svg>
<div class="t" style="left:358px;top:318.5px;font-size:12px;color:#1a1a1a;transform:scaleX(0.9500);transform-origin:0 0;">NavPane</div>
<div class="t" style="left:462.5px;top:318.5px;font-size:12px;color:#1a1a1a;transform:scaleX(0.8570);transform-origin:0 0;">REG_DWORD</div>
<div class="t" style="left:582.5px;top:318.5px;font-size:12px;color:#1a1a1a;transform:scaleX(0.8940);transform-origin:0 0;">0x00000001 (1)</div>
<svg style="left:340px;top:339px" width="16" height="16" viewBox="0 0 16 16"><path d="M0.5 0.5 H12.5 L15.5 3.5 V15.5 C12 13 9 16.5 6 14.5 C4 13.3 2 13.5 0.5 14 Z" fill="#f2f6fc" stroke="#a0a0a0" stroke-width="1"/><g fill="none" stroke="#27468a" stroke-width="1.7"><ellipse cx="5" cy="4.6" rx="1.7" ry="1.9"/><ellipse cx="10.6" cy="10.4" rx="1.7" ry="1.9"/></g><g fill="#27468a"><rect x="7.6" y="2.4" width="1.8" height="4.4"/><rect x="10.5" y="2.4" width="1.8" height="4.4"/><rect x="3.2" y="8.2" width="1.8" height="4.4"/><rect x="6.1" y="8.2" width="1.8" height="4.4"/></g></svg>
<div class="t" style="left:358px;top:337.5px;font-size:12px;color:#1a1a1a;transform:scaleX(0.9500);transform-origin:0 0;">PerformedOneTi...</div>
<div class="t" style="left:462.5px;top:337.5px;font-size:12px;color:#1a1a1a;transform:scaleX(0.8570);transform-origin:0 0;">REG_DWORD</div>
<div class="t" style="left:582.5px;top:337.5px;font-size:12px;color:#1a1a1a;transform:scaleX(0.8940);transform-origin:0 0;">0x00000001 (1)</div>
<svg style="left:340px;top:358px" width="16" height="16" viewBox="0 0 16 16"><path d="M0.5 0.5 H12.5 L15.5 3.5 V15.5 C12 13 9 16.5 6 14.5 C4 13.3 2 13.5 0.5 14 Z" fill="#f2f6fc" stroke="#a0a0a0" stroke-width="1"/><g fill="none" stroke="#27468a" stroke-width="1.7"><ellipse cx="5" cy="4.6" rx="1.7" ry="1.9"/><ellipse cx="10.6" cy="10.4" rx="1.7" ry="1.9"/></g><g fill="#27468a"><rect x="7.6" y="2.4" width="1.8" height="4.4"/><rect x="10.5" y="2.4" width="1.8" height="4.4"/><rect x="3.2" y="8.2" width="1.8" height="4.4"/><rect x="6.1" y="8.2" width="1.8" height="4.4"/></g></svg>
<div class="t" style="left:358px;top:356.5px;font-size:12px;color:#1a1a1a;transform:scaleX(0.9500);transform-origin:0 0;">ReindexedProfile</div>
<div class="t" style="left:462.5px;top:356.5px;font-size:12px;color:#1a1a1a;transform:scaleX(0.8570);transform-origin:0 0;">REG_DWORD</div>
<div class="t" style="left:582.5px;top:356.5px;font-size:12px;color:#1a1a1a;transform:scaleX(0.8940);transform-origin:0 0;">0x00000001 (1)</div>
<svg style="left:340px;top:377px" width="16" height="16" viewBox="0 0 16 16"><path d="M0.5 0.5 H12.5 L15.5 3.5 V15.5 C12 13 9 16.5 6 14.5 C4 13.3 2 13.5 0.5 14 Z" fill="#f2f6fc" stroke="#a0a0a0" stroke-width="1"/><g fill="none" stroke="#27468a" stroke-width="1.7"><ellipse cx="5" cy="4.6" rx="1.7" ry="1.9"/><ellipse cx="10.6" cy="10.4" rx="1.7" ry="1.9"/></g><g fill="#27468a"><rect x="7.6" y="2.4" width="1.8" height="4.4"/><rect x="10.5" y="2.4" width="1.8" height="4.4"/><rect x="3.2" y="8.2" width="1.8" height="4.4"/><rect x="6.1" y="8.2" width="1.8" height="4.4"/></g></svg>
<div class="t" style="left:358px;top:375.5px;font-size:12px;color:#1a1a1a;transform:scaleX(0.9500);transform-origin:0 0;">SeparateProcess</div>
<div class="t" style="left:462.5px;top:375.5px;font-size:12px;color:#1a1a1a;transform:scaleX(0.8570);transform-origin:0 0;">REG_DWORD</div>
<div class="t" style="left:582.5px;top:375.5px;font-size:12px;color:#1a1a1a;transform:scaleX(0.8940);transform-origin:0 0;">0x00000000 (0)</div>
<svg style="left:340px;top:396px" width="16" height="16" viewBox="0 0 16 16"><path d="M0.5 0.5 H12.5 L15.5 3.5 V15.5 C12 13 9 16.5 6 14.5 C4 13.3 2 13.5 0.5 14 Z" fill="#f2f6fc" stroke="#a0a0a0" stroke-width="1"/><g fill="none" stroke="#27468a" stroke-width="1.7"><ellipse cx="5" cy="4.6" rx="1.7" ry="1.9"/><ellipse cx="10.6" cy="10.4" rx="1.7" ry="1.9"/></g><g fill="#27468a"><rect x="7.6" y="2.4" width="1.8" height="4.4"/><rect x="10.5" y="2.4" width="1.8" height="4.4"/><rect x="3.2" y="8.2" width="1.8" height="4.4"/><rect x="6.1" y="8.2" width="1.8" height="4.4"/></g></svg>
<div class="t" style="left:358px;top:394.5px;font-size:12px;color:#1a1a1a;transform:scaleX(0.9500);transform-origin:0 0;">ServerAdminUI</div>
<div class="t" style="left:462.5px;top:394.5px;font-size:12px;color:#1a1a1a;transform:scaleX(0.8570);transform-origin:0 0;">REG_DWORD</div>
<div class="t" style="left:582.5px;top:394.5px;font-size:12px;color:#1a1a1a;transform:scaleX(0.8940);transform-origin:0 0;">0x00000000 (0)</div>
<svg style="left:340px;top:415px" width="16" height="16" viewBox="0 0 16 16"><path d="M0.5 0.5 H12.5 L15.5 3.5 V15.5 C12 13 9 16.5 6 14.5 C4 13.3 2 13.5 0.5 14 Z" fill="#f2f6fc" stroke="#a0a0a0" stroke-width="1"/><g fill="none" stroke="#27468a" stroke-width="1.7"><ellipse cx="5" cy="4.6" rx="1.7" ry="1.9"/><ellipse cx="10.6" cy="10.4" rx="1.7" ry="1.9"/></g><g fill="#27468a"><rect x="7.6" y="2.4" width="1.8" height="4.4"/><rect x="10.5" y="2.4" width="1.8" height="4.4"/><rect x="3.2" y="8.2" width="1.8" height="4.4"/><rect x="6.1" y="8.2" width="1.8" height="4.4"/></g></svg>
<div class="t" style="left:358px;top:413.5px;font-size:12px;color:#1a1a1a;transform:scaleX(0.9500);transform-origin:0 0;">ShellMigrationL...</div>
<div class="t" style="left:462.5px;top:413.5px;font-size:12px;color:#1a1a1a;transform:scaleX(0.8570);transform-origin:0 0;">REG_DWORD</div>
<div class="t" style="left:582.5px;top:413.5px;font-size:12px;color:#1a1a1a;transform:scaleX(0.8940);transform-origin:0 0;">0x00000003 (3)</div>
<svg style="left:340px;top:434px" width="16" height="16" viewBox="0 0 16 16"><path d="M0.5 0.5 H12.5 L15.5 3.5 V15.5 C12 13 9 16.5 6 14.5 C4 13.3 2 13.5 0.5 14 Z" fill="#f2f6fc" stroke="#a0a0a0" stroke-width="1"/><g fill="none" stroke="#27468a" stroke-width="1.7"><ellipse cx="5" cy="4.6" rx="1.7" ry="1.9"/><ellipse cx="10.6" cy="10.4" rx="1.7" ry="1.9"/></g><g fill="#27468a"><rect x="7.6" y="2.4" width="1.8" height="4.4"/><rect x="10.5" y="2.4" width="1.8" height="4.4"/><rect x="3.2" y="8.2" width="1.8" height="4.4"/><rect x="6.1" y="8.2" width="1.8" height="4.4"/></g></svg>
<div class="t" style="left:358px;top:432.5px;font-size:12px;color:#1a1a1a;transform:scaleX(0.9500);transform-origin:0 0;">ShowCompColor</div>
<div class="t" style="left:462.5px;top:432.5px;font-size:12px;color:#1a1a1a;transform:scaleX(0.8570);transform-origin:0 0;">REG_DWORD</div>
<div class="t" style="left:582.5px;top:432.5px;font-size:12px;color:#1a1a1a;transform:scaleX(0.8940);transform-origin:0 0;">0x00000001 (1)</div>
<svg style="left:340px;top:453px" width="16" height="16" viewBox="0 0 16 16"><path d="M0.5 0.5 H12.5 L15.5 3.5 V15.5 C12 13 9 16.5 6 14.5 C4 13.3 2 13.5 0.5 14 Z" fill="#f2f6fc" stroke="#a0a0a0" stroke-width="1"/><g fill="none" stroke="#27468a" stroke-width="1.7"><ellipse cx="5" cy="4.6" rx="1.7" ry="1.9"/><ellipse cx="10.6" cy="10.4" rx="1.7" ry="1.9"/></g><g fill="#27468a"><rect x="7.6" y="2.4" width="1.8" height="4.4"/><rect x="10.5" y="2.4" width="1.8" height="4.4"/><rect x="3.2" y="8.2" width="1.8" height="4.4"/><rect x="6.1" y="8.2" width="1.8" height="4.4"/></g></svg>
<div class="t" style="left:358px;top:451.5px;font-size:12px;color:#1a1a1a;transform:scaleX(0.9500);transform-origin:0 0;">ShowInfoTip</div>
<div class="t" style="left:462.5px;top:451.5px;font-size:12px;color:#1a1a1a;transform:scaleX(0.8570);transform-origin:0 0;">REG_DWORD</div>
<div class="t" style="left:582.5px;top:451.5px;font-size:12px;color:#1a1a1a;transform:scaleX(0.8940);transform-origin:0 0;">0x00000001 (1)</div>
<svg style="left:340px;top:472px" width="16" height="16" viewBox="0 0 16 16"><path d="M0.5 0.5 H12.5 L15.5 3.5 V15.5 C12 13 9 16.5 6 14.5 C4 13.3 2 13.5 0.5 14 Z" fill="#f2f6fc" stroke="#a0a0a0" stroke-width="1"/><g fill="none" stroke="#27468a" stroke-width="1.7"><ellipse cx="5" cy="4.6" rx="1.7" ry="1.9"/><ellipse cx="10.6" cy="10.4" rx="1.7" ry="1.9"/></g><g fill="#27468a"><rect x="7.6" y="2.4" width="1.8" height="4.4"/><rect x="10.5" y="2.4" width="1.8" height="4.4"/><rect x="3.2" y="8.2" width="1.8" height="4.4"/><rect x="6.1" y="8.2" width="1.8" height="4.4"/></g></svg>
<div class="t" style="left:358px;top:470.5px;font-size:12px;color:#1a1a1a;transform:scaleX(0.9500);transform-origin:0 0;">ShowStatusBar</div>
<div class="t" style="left:462.5px;top:470.5px;font-size:12px;color:#1a1a1a;transform:scaleX(0.8570);transform-origin:0 0;">REG_DWORD</div>
<div class="t" style="left:582.5px;top:470.5px;font-size:12px;color:#1a1a1a;transform:scaleX(0.8940);transform-origin:0 0;">0x00000001 (1)</div>
<svg style="left:340px;top:491px" width="16" height="16" viewBox="0 0 16 16"><path d="M0.5 0.5 H12.5 L15.5 3.5 V15.5 C12 13 9 16.5 6 14.5 C4 13.3 2 13.5 0.5 14 Z" fill="#f2f6fc" stroke="#a0a0a0" stroke-width="1"/><g fill="none" stroke="#27468a" stroke-width="1.7"><ellipse cx="5" cy="4.6" rx="1.7" ry="1.9"/><ellipse cx="10.6" cy="10.4" rx="1.7" ry="1.9"/></g><g fill="#27468a"><rect x="7.6" y="2.4" width="1.8" height="4.4"/><rect x="10.5" y="2.4" width="1.8" height="4.4"/><rect x="3.2" y="8.2" width="1.8" height="4.4"/><rect x="6.1" y="8.2" width="1.8" height="4.4"/></g></svg>
<div class="t" style="left:358px;top:489.5px;font-size:12px;color:#1a1a1a;transform:scaleX(0.9500);transform-origin:0 0;">ShowSuperHidd...</div>
<div class="t" style="left:462.5px;top:489.5px;font-size:12px;color:#1a1a1a;transform:scaleX(0.8570);transform-origin:0 0;">REG_DWORD</div>
<div class="t" style="left:582.5px;top:489.5px;font-size:12px;color:#1a1a1a;transform:scaleX(0.8940);transform-origin:0 0;">0x00000000 (0)</div>
<svg style="left:340px;top:510px" width="16" height="16" viewBox="0 0 16 16"><path d="M0.5 0.5 H12.5 L15.5 3.5 V15.5 C12 13 9 16.5 6 14.5 C4 13.3 2 13.5 0.5 14 Z" fill="#f2f6fc" stroke="#a0a0a0" stroke-width="1"/><g fill="none" stroke="#27468a" stroke-width="1.7"><ellipse cx="5" cy="4.6" rx="1.7" ry="1.9"/><ellipse cx="10.6" cy="10.4" rx="1.7" ry="1.9"/></g><g fill="#27468a"><rect x="7.6" y="2.4" width="1.8" height="4.4"/><rect x="10.5" y="2.4" width="1.8" height="4.4"/><rect x="3.2" y="8.2" width="1.8" height="4.4"/><rect x="6.1" y="8.2" width="1.8" height="4.4"/></g></svg>
<div class="t" style="left:358px;top:508.5px;font-size:12px;color:#1a1a1a;transform:scaleX(0.9500);transform-origin:0 0;">ShowTaskViewB...</div>
<div class="t" style="left:462.5px;top:508.5px;font-size:12px;color:#1a1a1a;transform:scaleX(0.8570);transform-origin:0 0;">REG_DWORD</div>
<div class="t" style="left:582.5px;top:508.5px;font-size:12px;color:#1a1a1a;transform:scaleX(0.8940);transform-origin:0 0;">0x00000000 (0)</div>
<svg style="left:340px;top:529px" width="16" height="16" viewBox="0 0 16 16"><path d="M0.5 0.5 H12.5 L15.5 3.5 V15.5 C12 13 9 16.5 6 14.5 C4 13.3 2 13.5 0.5 14 Z" fill="#f2f6fc" stroke="#a0a0a0" stroke-width="1"/><g fill="none" stroke="#27468a" stroke-width="1.7"><ellipse cx="5" cy="4.6" rx="1.7" ry="1.9"/><ellipse cx="10.6" cy="10.4" rx="1.7" ry="1.9"/></g><g fill="#27468a"><rect x="7.6" y="2.4" width="1.8" height="4.4"/><rect x="10.5" y="2.4" width="1.8" height="4.4"/><rect x="3.2" y="8.2" width="1.8" height="4.4"/><rect x="6.1" y="8.2" width="1.8" height="4.4"/></g></svg>
<div class="t" style="left:358px;top:527.5px;font-size:12px;color:#1a1a1a;transform:scaleX(0.9500);transform-origin:0 0;">ShowTypeOverlay</div>
<div class="t" style="left:462.5px;top:527.5px;font-size:12px;color:#1a1a1a;transform:scaleX(0.8570);transform-origin:0 0;">REG_DWORD</div>
<div class="t" style="left:582.5px;top:527.5px;font-size:12px;color:#1a1a1a;transform:scaleX(0.8940);transform-origin:0 0;">0x00000001 (1)</div>
<svg style="left:340px;top:548px" width="16" height="16" viewBox="0 0 16 16"><path d="M0.5 0.5 H12.5 L15.5 3.5 V15.5 C12 13 9 16.5 6 14.5 C4 13.3 2 13.5 0.5 14 Z" fill="#f2f6fc" stroke="#a0a0a0" stroke-width="1"/><g fill="none" stroke="#27468a" stroke-width="1.7"><ellipse cx="5" cy="4.6" rx="1.7" ry="1.9"/><ellipse cx="10.6" cy="10.4" rx="1.7" ry="1.9"/></g><g fill="#27468a"><rect x="7.6" y="2.4" width="1.8" height="4.4"/><rect x="10.5" y="2.4" width="1.8" height="4.4"/><rect x="3.2" y="8.2" width="1.8" height="4.4"/><rect x="6.1" y="8.2" width="1.8" height="4.4"/></g></svg>
<div class="t" style="left:358px;top:546.5px;font-size:12px;color:#1a1a1a;transform:scaleX(0.9500);transform-origin:0 0;">Start_SearchFiles</div>
<div class="t" style="left:462.5px;top:546.5px;font-size:12px;color:#1a1a1a;transform:scaleX(0.8570);transform-origin:0 0;">REG_DWORD</div>
<div class="t" style="left:582.5px;top:546.5px;font-size:12px;color:#1a1a1a;transform:scaleX(0.8940);transform-origin:0 0;">0x00000002 (2)</div>
<svg style="left:340px;top:567px" width="16" height="16" viewBox="0 0 16 16"><path d="M0.5 0.5 H12.5 L15.5 3.5 V15.5 C12 13 9 16.5 6 14.5 C4 13.3 2 13.5 0.5 14 Z" fill="#f2f6fc" stroke="#a0a0a0" stroke-width="1"/><g fill="none" stroke="#27468a" stroke-width="1.7"><ellipse cx="5" cy="4.6" rx="1.7" ry="1.9"/><ellipse cx="10.6" cy="10.4" rx="1.7" ry="1.9"/></g><g fill="#27468a"><rect x="7.6" y="2.4" width="1.8" height="4.4"/><rect x="10.5" y="2.4" width="1.8" height="4.4"/><rect x="3.2" y="8.2" width="1.8" height="4.4"/><rect x="6.1" y="8.2" width="1.8" height="4.4"/></g></svg>
<div class="t" style="left:358px;top:565.5px;font-size:12px;color:#1a1a1a;transform:scaleX(0.9500);transform-origin:0 0;">StartMenuInit</div>
<div class="t" style="left:462.5px;top:565.5px;font-size:12px;color:#1a1a1a;transform:scaleX(0.8570);transform-origin:0 0;">REG_DWORD</div>
<div class="t" style="left:582.5px;top:565.5px;font-size:12px;color:#1a1a1a;transform:scaleX(0.8940);transform-origin:0 0;">0x0000000d (13)</div>
<svg style="left:340px;top:586px" width="16" height="16" viewBox="0 0 16 16"><path d="M0.5 0.5 H12.5 L15.5 3.5 V15.5 C12 13 9 16.5 6 14.5 C4 13.3 2 13.5 0.5 14 Z" fill="#f2f6fc" stroke="#a0a0a0" stroke-width="1"/><g fill="none" stroke="#27468a" stroke-width="1.7"><ellipse cx="5" cy="4.6" rx="1.7" ry="1.9"/><ellipse cx="10.6" cy="10.4" rx="1.7" ry="1.9"/></g><g fill="#27468a"><rect x="7.6" y="2.4" width="1.8" height="4.4"/><rect x="10.5" y="2.4" width="1.8" height="4.4"/><rect x="3.2" y="8.2" width="1.8" height="4.4"/><rect x="6.1" y="8.2" width="1.8" height="4.4"/></g></svg>
<div class="t" style="left:358px;top:584.5px;font-size:12px;color:#1a1a1a;transform:scaleX(0.9500);transform-origin:0 0;">StartShownOnU...</div>
<div class="t" style="left:462.5px;top:584.5px;font-size:12px;color:#1a1a1a;transform:scaleX(0.8570);transform-origin:0 0;">REG_DWORD</div>
<div class="t" style="left:582.5px;top:584.5px;font-size:12px;color:#1a1a1a;transform:scaleX(0.8940);transform-origin:0 0;">0x00000001 (1)</div>
<svg style="left:340px;top:605px" width="16" height="16" viewBox="0 0 16 16"><path d="M0.5 0.5 H12.5 L15.5 3.5 V15.5 C12 13 9 16.5 6 14.5 C4 13.3 2 13.5 0.5 14 Z" fill="#f2f6fc" stroke="#a0a0a0" stroke-width="1"/><g fill="none" stroke="#27468a" stroke-width="1.7"><ellipse cx="5" cy="4.6" rx="1.7" ry="1.9"/><ellipse cx="10.6" cy="10.4" rx="1.7" ry="1.9"/></g><g fill="#27468a"><rect x="7.6" y="2.4" width="1.8" height="4.4"/><rect x="10.5" y="2.4" width="1.8" height="4.4"/><rect x="3.2" y="8.2" width="1.8" height="4.4"/><rect x="6.1" y="8.2" width="1.8" height="4.4"/></g></svg>
<div class="t" style="left:358px;top:603.5px;font-size:12px;color:#1a1a1a;transform:scaleX(0.9500);transform-origin:0 0;">TaskbarAI</div>
<div class="t" style="left:462.5px;top:603.5px;font-size:12px;color:#1a1a1a;transform:scaleX(0.8570);transform-origin:0 0;">REG_DWORD</div>
<div class="t" style="left:582.5px;top:603.5px;font-size:12px;color:#1a1a1a;transform:scaleX(0.8940);transform-origin:0 0;">0x00000001 (1)</div>
<svg style="left:340px;top:624px" width="16" height="16" viewBox="0 0 16 16"><path d="M0.5 0.5 H12.5 L15.5 3.5 V15.5 C12 13 9 16.5 6 14.5 C4 13.3 2 13.5 0.5 14 Z" fill="#f2f6fc" stroke="#a0a0a0" stroke-width="1"/><g fill="none" stroke="#27468a" stroke-width="1.7"><ellipse cx="5" cy="4.6" rx="1.7" ry="1.9"/><ellipse cx="10.6" cy="10.4" rx="1.7" ry="1.9"/></g><g fill="#27468a"><rect x="7.6" y="2.4" width="1.8" height="4.4"/><rect x="10.5" y="2.4" width="1.8" height="4.4"/><rect x="3.2" y="8.2" width="1.8" height="4.4"/><rect x="6.1" y="8.2" width="1.8" height="4.4"/></g></svg>
<div class="t" style="left:358px;top:622.5px;font-size:12px;color:#1a1a1a;transform:scaleX(0.9500);transform-origin:0 0;">TaskbarAnimati...</div>
<div class="t" style="left:462.5px;top:622.5px;font-size:12px;color:#1a1a1a;transform:scaleX(0.8570);transform-origin:0 0;">REG_DWORD</div>
<div class="t" style="left:582.5px;top:622.5px;font-size:12px;color:#1a1a1a;transform:scaleX(0.8940);transform-origin:0 0;">0x00000001 (1)</div>
<svg style="left:340px;top:643px" width="16" height="16" viewBox="0 0 16 16"><path d="M0.5 0.5 H12.5 L15.5 3.5 V15.5 C12 13 9 16.5 6 14.5 C4 13.3 2 13.5 0.5 14 Z" fill="#f2f6fc" stroke="#a0a0a0" stroke-width="1"/><g fill="none" stroke="#27468a" stroke-width="1.7"><ellipse cx="5" cy="4.6" rx="1.7" ry="1.9"/><ellipse cx="10.6" cy="10.4" rx="1.7" ry="1.9"/></g><g fill="#27468a"><rect x="7.6" y="2.4" width="1.8" height="4.4"/><rect x="10.5" y="2.4" width="1.8" height="4.4"/><rect x="3.2" y="8.2" width="1.8" height="4.4"/><rect x="6.1" y="8.2" width="1.8" height="4.4"/></g></svg>
<div class="t" style="left:358px;top:641.5px;font-size:12px;color:#1a1a1a;transform:scaleX(0.9500);transform-origin:0 0;">TaskbarAutoHid...</div>
<div class="t" style="left:462.5px;top:641.5px;font-size:12px;color:#1a1a1a;transform:scaleX(0.8570);transform-origin:0 0;">REG_DWORD</div>
<div class="t" style="left:582.5px;top:641.5px;font-size:12px;color:#1a1a1a;transform:scaleX(0.8940);transform-origin:0 0;">0x00000000 (0)</div>
<svg style="left:340px;top:662px" width="16" height="16" viewBox="0 0 16 16"><path d="M0.5 0.5 H12.5 L15.5 3.5 V15.5 C12 13 9 16.5 6 14.5 C4 13.3 2 13.5 0.5 14 Z" fill="#f2f6fc" stroke="#a0a0a0" stroke-width="1"/><g fill="none" stroke="#27468a" stroke-width="1.7"><ellipse cx="5" cy="4.6" rx="1.7" ry="1.9"/><ellipse cx="10.6" cy="10.4" rx="1.7" ry="1.9"/></g><g fill="#27468a"><rect x="7.6" y="2.4" width="1.8" height="4.4"/><rect x="10.5" y="2.4" width="1.8" height="4.4"/><rect x="3.2" y="8.2" width="1.8" height="4.4"/><rect x="6.1" y="8.2" width="1.8" height="4.4"/></g></svg>
<div class="t" style="left:358px;top:660.5px;font-size:12px;color:#1a1a1a;transform:scaleX(0.9500);transform-origin:0 0;">TaskbarDa</div>
<div class="t" style="left:462.5px;top:660.5px;font-size:12px;color:#1a1a1a;transform:scaleX(0.8570);transform-origin:0 0;">REG_DWORD</div>
<div class="t" style="left:582.5px;top:660.5px;font-size:12px;color:#1a1a1a;transform:scaleX(0.8940);transform-origin:0 0;">0x00000001 (1)</div>
</div>
<div class="a" style="left:1263px;top:65px;width:15px;height:605px;background:#f0f0f0"></div>
<div class="a" style="left:1269px;top:83px;width:2px;height:437px;background:#858585;border-radius:1px"></div>
<div class="a" style="left:0;top:672px;width:1280px;height:48px;background:#e2ecf7"></div>
<div class="a" style="left:196px;top:106px;width:257px;height:229px;background:#f9f9f9;border:1px solid #e3e3e3;border-radius:5px;box-shadow:0 3px 9px rgba(0,0,0,0.13)"></div>
<div class="a" style="left:201px;top:131px;width:248px;height:21px;background:#f0f0f0;border-radius:4px"></div>
<div class="a" style="left:201px;top:130px;width:198px;height:16px;border:3px solid #d32a2a"></div>
<div class="t" style="left:233px;top:110.5px;font-size:12px;color:#8e8e8e;transform:scaleX(0.9600);transform-origin:0 0;">Expand</div>
<div class="t" style="left:233px;top:132.5px;font-size:12px;color:#1a1a1a;transform:scaleX(0.9600);transform-origin:0 0;">New</div>
<div class="t" style="left:233px;top:154.5px;font-size:12px;color:#1a1a1a;transform:scaleX(0.9600);transform-origin:0 0;">Find...</div>
<div class="t" style="left:233px;top:185.5px;font-size:12px;color:#1a1a1a;transform:scaleX(0.9600);transform-origin:0 0;">Delete</div>
<div class="t" style="left:233px;top:207.5px;font-size:12px;color:#1a1a1a;transform:scaleX(0.9600);transform-origin:0 0;">Rename</div>
<div class="t" style="left:233px;top:238.5px;font-size:12px;color:#1a1a1a;transform:scaleX(0.9600);transform-origin:0 0;">Export</div>
<div class="t" style="left:233px;top:260.5px;font-size:12px;color:#1a1a1a;transform:scaleX(0.9600);transform-origin:0 0;">Permissions...</div>
<div class="t" style="left:233px;top:291.5px;font-size:12px;color:#1a1a1a;transform:scaleX(0.9600);transform-origin:0 0;">Copy Key Name</div>
<div class="t" style="left:233px;top:313.5px;font-size:12px;color:#1a1a1a;transform:scaleX(0.9330);transform-origin:0 0;">Go to HKEY_LOCAL_MACHINE</div>
<div class="a" style="left:204px;top:179px;width:242px;height:1px;background:#e0e0e0"></div>
<div class="a" style="left:204px;top:232px;width:242px;height:1px;background:#e0e0e0"></div>
<div class="a" style="left:204px;top:285px;width:242px;height:1px;background:#e0e0e0"></div>
<svg style="left:434px;top:138px" width="6" height="9" viewBox="0 0 6 9"><path d="M0.7 0.7 L4.8 4.5 L0.7 8.3" fill="none" stroke="#444" stroke-width="1.2"/></svg>
<div class="a" style="left:450px;top:128px;width:221px;height:167px;background:#f9f9f9;border:1px solid #e3e3e3;border-radius:5px;box-shadow:0 3px 9px rgba(0,0,0,0.13)"></div>
<div class="a" style="left:455px;top:206px;width:211px;height:21px;background:#f0f0f0;border-radius:4px"></div>
<div class="a" style="left:458px;top:157px;width:206px;height:1px;background:#e0e0e0"></div>
<div class="t" style="left:487px;top:132.5px;font-size:12px;color:#1a1a1a;transform:scaleX(0.9660);transform-origin:0 0;">Key</div>
<div class="t" style="left:487px;top:163.5px;font-size:12px;color:#1a1a1a;transform:scaleX(0.9660);transform-origin:0 0;">String Value</div>
<div class="t" style="left:487px;top:185.5px;font-size:12px;color:#1a1a1a;transform:scaleX(0.9660);transform-origin:0 0;">Binary Value</div>
<div class="t" style="left:487px;top:207.5px;font-size:12px;color:#1a1a1a;transform:scaleX(0.9660);transform-origin:0 0;">DWORD (32-bit) Value</div>
<div class="t" style="left:487px;top:229.5px;font-size:12px;color:#1a1a1a;transform:scaleX(0.9660);transform-origin:0 0;">QWORD (64-bit) Value</div>
<div class="t" style="left:487px;top:251.5px;font-size:12px;color:#1a1a1a;transform:scaleX(0.9660);transform-origin:0 0;">Multi-String Value</div>
<div class="t" style="left:487px;top:273.5px;font-size:12px;color:#1a1a1a;transform:scaleX(0.9660);transform-origin:0 0;">Expandable String Value</div>
<svg style="left:0;top:0" width="1280" height="720" viewBox="0 0 1280 720"><path d="M885 131.5 L646 212" stroke="#d42828" stroke-width="4" stroke-linecap="butt"/><path d="M632.5 218.5 L647 203.5 L652.8 221.5 Z" fill="#dc2020" stroke="#d82222" stroke-width="1.2" stroke-linejoin="round"/></svg>
<svg style="left:19px;top:679px" width="30" height="30" viewBox="0 0 30 30"><circle cx="12" cy="17.5" r="10.5" fill="#f0a830"/><g fill="#ffe27a"><rect x="5" y="11" width="11" height="2"/><rect x="2.5" y="15" width="16" height="2"/><rect x="2.5" y="19" width="16" height="2"/><rect x="5" y="23" width="11" height="1.6"/></g><circle cx="20" cy="7.5" r="7.5" fill="#c0282d"/><text x="17.2" y="11.6" font-family="Liberation Sans" font-size="10.5" fill="#fff">1</text></svg>
<svg style="left:241px;top:684px" width="24" height="24" viewBox="0 0 24 24"><defs><linearGradient id="sg" x1="0" y1="0" x2="1" y2="1"><stop offset="0" stop-color="#52c6f5"/><stop offset="1" stop-color="#0f6cc8"/></linearGradient></defs><g fill="url(#sg)"><rect x="1" y="1" width="10.7" height="10.7" rx="1"/><rect x="12.3" y="1" width="10.7" height="10.7" rx="1"/><rect x="1" y="12.3" width="10.7" height="10.7" rx="1"/><rect x="12.3" y="12.3" width="10.7" height="10.7" rx="1"/></g></svg>
<svg style="left:285px;top:683px" width="24" height="24" viewBox="0 0 24 24"><circle cx="10" cy="10" r="7.5" fill="none" stroke="#1c1c1c" stroke-width="2.3"/><path d="M15.5 15.5 L21.5 21.5" stroke="#1c1c1c" stroke-width="2.6" stroke-linecap="round"/></svg>
<svg style="left:329px;top:684px" width="24" height="24" viewBox="0 0 24 24"><path d="M1 3.5 Q1 2 2.5 2 H8.5 L10.5 4.5 H21.5 Q23 4.5 23 6 V21 Q23 22.5 21.5 22.5 H2.5 Q1 22.5 1 21 Z" fill="#e8b23a"/><path d="M1 8 H23 V21 Q23 22.5 21.5 22.5 H2.5 Q1 22.5 1 21 Z" fill="#fbd65e"/><rect x="6.5" y="15" width="11" height="5.5" rx="1" fill="#1d6fc2"/></svg>
<svg style="left:373px;top:682px" width="24" height="26" viewBox="0 0 24 26"><rect x="2" y="8" width="20" height="16" fill="#fff" stroke="#333" stroke-width="1.3"/><path d="M1.5 3.5 L21 1 L21.8 6 L2.3 8.5 Z" fill="#222"/><g fill="#fff"><path d="M5 3.3 L7.5 3 L6.2 7.8 L3.8 8.1Z"/><path d="M10 2.7 L12.5 2.4 L11.2 7.2 L8.8 7.5Z"/><path d="M15 2.1 L17.5 1.8 L16.2 6.6 L13.8 6.9Z"/></g><text x="3.2" y="20.5" font-family="Liberation Sans" font-weight="bold" font-size="9.5" fill="#d84020">3</text><text x="9.3" y="20.5" font-family="Liberation Sans" font-weight="bold" font-size="9.5" fill="#2a9a3a">2</text><text x="15.3" y="20.5" font-family="Liberation Sans" font-weight="bold" font-size="9.5" fill="#2060c0">1</text></svg>
<svg style="left:417px;top:683px" width="26" height="26" viewBox="0 0 26 26"><defs><linearGradient id="eg1" x1="0" y1="1" x2="0.6" y2="0"><stop offset="0" stop-color="#0b4d9e"/><stop offset="1" stop-color="#1d8ddc"/></linearGradient><linearGradient id="eg2" x1="0" y1="0" x2="1" y2="1"><stop offset="0" stop-color="#2aa8e0"/><stop offset="0.5" stop-color="#36c4d0"/><stop offset="1" stop-color="#5ad65e"/></linearGradient></defs><circle cx="13" cy="13" r="12" fill="url(#eg1)"/><path d="M1.5 11 Q3.5 1 13 1 Q24.5 1 25 12.5 Q25 18.5 19.5 18.5 Q16.5 18.5 16.5 15 Q16.5 9.5 10.5 9.5 Q5 9.5 1.5 13 Z" fill="url(#eg2)"/><ellipse cx="13.2" cy="15.2" rx="3.3" ry="2.8" fill="#e6f0fa"/></svg>
<svg style="left:461px;top:684px" width="25" height="25" viewBox="0 0 25 25"><path d="M8.5 5.5 V3.5 Q8.5 1.5 10.5 1.5 H14.5 Q16.5 1.5 16.5 3.5 V5.5" fill="none" stroke="#3a90d8" stroke-width="2"/><path d="M1.5 5 H23.5 V21 Q23.5 24 20.5 24 H4.5 Q1.5 24 1.5 21 Z" fill="#1f4f9a"/><rect x="8.5" y="10" width="3.6" height="3.6" fill="#d87050"/><rect x="12.9" y="10" width="3.6" height="3.6" fill="#7ab84a"/><rect x="8.5" y="14.4" width="3.6" height="3.6" fill="#3aa0e0"/><rect x="12.9" y="14.4" width="3.6" height="3.6" fill="#e8c860"/></svg>
<svg style="left:507px;top:682px" width="22" height="26" viewBox="0 0 22 26"><rect x="3" y="3" width="17" height="20" rx="1.5" fill="#5ab8e0"/><g fill="#1a6a98"><rect x="6" y="8" width="11" height="1.6"/><rect x="6" y="12" width="11" height="1.6"/><rect x="6" y="16" width="11" height="1.6"/></g><rect x="2.5" y="22" width="18" height="2.2" fill="#8a4a20"/><g fill="#1a3a5a"><circle cx="6.5" cy="3" r="1.2"/><circle cx="9.5" cy="3" r="1.2"/><circle cx="12.5" cy="3" r="1.2"/><circle cx="15.5" cy="3" r="1.2"/></g></svg>
<svg style="left:549px;top:683px" width="26" height="26" viewBox="0 0 26 26"><path d="M13 2 C5 2 1 8 1.5 14 C2 21 7 24 10 22 C12.5 20 10 17 13 16 C17 15 24 17 24 10 C24 5 19 2 13 2 Z" fill="#4ab4e8"/><circle cx="6.5" cy="10" r="2" fill="#6a7a8a"/><circle cx="10" cy="6" r="2" fill="#7ac050"/><circle cx="15.5" cy="5.5" r="2" fill="#f0c030"/><path d="M19 11 L22 24" stroke="#6a4a2a" stroke-width="2.6"/><path d="M18 9 L20 8.5 L21 12 L19.2 12.5 Z" fill="#e8e8e8"/></svg>
<svg style="left:592px;top:678px" width="32" height="32" viewBox="0 0 32 32"><circle cx="14" cy="18" r="12" fill="#db4437"/><path d="M14 18 L3.6 24 A12 12 0 0 0 20 28.4 Z" fill="#23a24a"/><path d="M14 18 L20 28.4 A12 12 0 0 0 26 18 L25.5 14 Z" fill="#f4c20d"/><circle cx="14" cy="18" r="5.3" fill="#fff"/><circle cx="14" cy="18" r="4.1" fill="#1a73e8"/><circle cx="23.5" cy="8.5" r="8" fill="#17877a" stroke="#e2ecf7" stroke-width="1"/><text x="19.3" y="12.3" font-family="Liberation Sans" font-weight="bold" font-size="10" fill="#fff">M</text></svg>
<svg style="left:637px;top:686px" width="26" height="20" viewBox="0 0 26 20"><g transform="skewX(-8)"><rect x="4" y="1" width="20" height="5.5" rx="0.5" fill="#a03a7a"/><rect x="4" y="7" width="20" height="5.5" rx="0.5" fill="#2a3a8a"/><rect x="4" y="13" width="20" height="5.5" rx="0.5" fill="#2a8a3a"/></g><g fill="#f0d0e0" opacity="0.8"><rect x="3" y="3" width="19" height="1"/><rect x="2" y="9" width="19" height="1"/><rect x="1" y="15" width="19" height="1"/></g><rect x="11.5" y="0" width="2.5" height="20" fill="#c8a060"/></svg>
<svg style="left:681px;top:683px" width="26" height="26" viewBox="0 0 26 26"><rect x="1" y="1" width="24" height="24" rx="1.5" fill="#142e6a"/><text x="2.5" y="12" font-family="Liberation Sans" font-weight="bold" font-size="10" fill="#fff">DEV</text><rect x="3" y="15" width="20" height="8" fill="#2a6ac8"/><path d="M5 19 H21 M8 16 L5 19 L8 22 M18 16 L21 19 L18 22" stroke="#6ab8ff" stroke-width="1.3" fill="none"/></svg>
<svg style="left:725px;top:683px" width="25" height="25" viewBox="0 0 25 25"><rect x="7" y="1.5" width="16" height="21" fill="#fafafa" stroke="#b0b8c8" stroke-width="0.8"/><g fill="#3a5a9a"><rect x="13" y="7" width="8" height="1.3"/><rect x="13" y="10" width="8" height="1.3"/><rect x="9" y="14" width="12" height="1.3"/><rect x="9" y="17" width="12" height="1.3"/></g><path d="M1.5 4 L12 2.5 V21.5 L1.5 20 Z" fill="#2b5aa8"/><text x="3" y="15" font-family="Liberation Sans" font-weight="bold" font-size="10" fill="#fff">W</text></svg>
<svg style="left:770px;top:683px" width="24" height="26" viewBox="0 0 24 26"><path d="M2 4 Q12 -0.5 22 4 V12 Q22 21 12 25 Q2 21 2 12 Z" fill="#2846b8"/><path d="M4 5 Q12 1.5 20 5 V12 Q20 19 12 23 Q4 19 4 12 Z" fill="#3658d0"/><path d="M9 7 Q15 5.5 16 9 Q16.5 11.5 13.5 12.5 Q17.5 13.5 16.5 17 Q15 20 9 19.5 Q11 16 11.5 13 Q12 9.5 9 7 Z" fill="#fff"/></svg>
<svg style="left:813px;top:684px" width="25" height="24" viewBox="0 0 25 24"><rect x="1.5" y="1" width="22" height="22" rx="2" fill="#2f7fd0"/><path d="M1.5 19 L11 9.5 L23.5 20 V21 Q23.5 23 21.5 23 H3.5 Q1.5 23 1.5 21 Z" fill="#5cc0f0"/><path d="M1.5 23 V19 L8 13 L16 23 Z" fill="#2a98e0"/><circle cx="18" cy="5.5" r="2.2" fill="#fff"/></svg>
<div class="a" style="left:850px;top:677px;width:39px;height:38px;background:#eef3fa;border-radius:5px;box-shadow:0 0 0 1px #e3e9f1"></div>
<svg style="left:858px;top:683px" width="26" height="24" viewBox="0 0 26 24"><g fill="#1a88c8"><path d="M4 8 L10 6 L10 20 L4 22 Z"/><path d="M10 6 L17 8 L17 22 L10 20 Z" fill="#0e6aa8"/><path d="M17 8 L22 6.5 L22 19 L17 22 Z" fill="#2aa0e0"/></g><g stroke="#dff2ff" stroke-width="0.9"><path d="M4 12.5 L10 10.5 L17 12.5 L22 11 M4 17 L10 15 L17 17 L22 15.5 M7 7 V21 M13.5 7 V21 M19.5 7 V20"/></g><circle cx="16" cy="3.5" r="2.5" fill="#1a88c8"/><circle cx="21.5" cy="8" r="2.5" fill="#2aa0e0"/></svg>
<div class="a" style="left:862px;top:712px;width:16px;height:3px;background:#1a6fc4;border-radius:2px"></div>
<div class="a" style="left:338px;top:713px;width:7px;height:2.5px;background:#7d8591;border-radius:1px"></div>
<div class="a" style="left:514px;top:713px;width:7px;height:2.5px;background:#7d8591;border-radius:1px"></div>
<div class="a" style="left:558px;top:713px;width:7px;height:2.5px;background:#7d8591;border-radius:1px"></div>
<div class="a" style="left:602px;top:713px;width:7px;height:2.5px;background:#7d8591;border-radius:1px"></div>
<div class="a" style="left:646px;top:713px;width:7px;height:2.5px;background:#7d8591;border-radius:1px"></div>
<div class="a" style="left:734px;top:713px;width:7px;height:2.5px;background:#7d8591;border-radius:1px"></div>
<div class="a" style="left:778px;top:713px;width:7px;height:2.5px;background:#7d8591;border-radius:1px"></div>
<div class="a" style="left:822px;top:713px;width:7px;height:2.5px;background:#7d8591;border-radius:1px"></div>
<svg style="left:959px;top:690px" width="14" height="10" viewBox="0 0 14 10"><path d="M1.5 8 L7 2.5 L12.5 8" fill="none" stroke="#222" stroke-width="1.7"/></svg>
<svg style="left:988px;top:686px" width="20" height="20" viewBox="0 0 20 20"><path d="M2.5 9 A7 7 0 0 1 14.5 4.5 M17.5 11 A7 7 0 0 1 5.5 15.5" fill="none" stroke="#222" stroke-width="1.5"/><path d="M14.8 1.5 V5 H11.3" fill="none" stroke="#222" stroke-width="1.5"/><path d="M5.2 18.5 V15 H8.7" fill="none" stroke="#222" stroke-width="1.5"/><circle cx="14.5" cy="14" r="4.2" fill="#f39c12" stroke="#e2ecf7" stroke-width="0.8"/></svg>
<svg style="left:1020px;top:688px" width="19" height="14" viewBox="0 0 19 14"><defs><linearGradient id="cg" x1="0" y1="0" x2="0" y2="1"><stop offset="0" stop-color="#e8e8e8"/><stop offset="1" stop-color="#8a8a8a"/></linearGradient></defs><path d="M4.5 12.5 Q1 12.5 1.2 9.2 Q1.5 6.3 4.8 6.5 Q6 2 10.2 2 Q14.2 2.2 14.8 6 Q18 6.5 17.8 9.5 Q17.5 12.5 14.5 12.5 Z" fill="url(#cg)" stroke="#333" stroke-width="1.2"/></svg>
<svg style="left:1053px;top:686px" width="18" height="16" viewBox="0 0 18 16"><path d="M1 6 Q9 -1 17 6 M3.5 8.6 Q9 3.6 14.5 8.6 M6 11.2 Q9 8.7 12 11.2" fill="none" stroke="#222" stroke-width="1.5"/><circle cx="9" cy="13.8" r="1.4" fill="#222"/></svg>
<svg style="left:1077px;top:687px" width="18" height="16" viewBox="0 0 18 16"><path d="M1.2 5.5 H4 L8 2 V14 L4 10.5 H1.2 Z" fill="none" stroke="#222" stroke-width="1.3"/><path d="M11 5 Q12.5 8 11 11 M13.5 3 Q16.5 8 13.5 13" fill="none" stroke="#222" stroke-width="1.3"/></svg>
<svg style="left:1101px;top:690px" width="18" height="12" viewBox="0 0 18 12"><rect x="0.7" y="0.7" width="14.6" height="9.6" rx="2" fill="none" stroke="#222" stroke-width="1.3"/><rect x="2.6" y="2.6" width="5.4" height="5.8" fill="#222"/><rect x="16" y="3.5" width="1.8" height="4" rx="0.5" fill="#222"/></svg>
<div class="t" style="left:1168px;top:679px;font-size:12px;color:#1a1a1a;transform:scaleX(0.9657);transform-origin:0 0;">05:32</div>
<div class="t" style="left:1136px;top:695px;font-size:12px;color:#1a1a1a;transform:scaleX(1.0156);transform-origin:0 0;">25/06/2024</div>
<svg style="left:1204px;top:688px" width="16" height="17" viewBox="0 0 16 17"><path d="M8 0.8 Q13.5 0.8 13.5 7 V10.5 L15.2 13.5 H0.8 L2.5 10.5 V7 Q2.5 0.8 8 0.8 Z" fill="#1a3e9a"/><path d="M5.8 14.8 Q8 17.5 10.2 14.8 Z" fill="#1a3e9a"/></svg>
<svg style="left:1235px;top:684px" width="28" height="26" viewBox="0 0 28 26"><defs><linearGradient id="cp1" x1="0" y1="0" x2="0" y2="1"><stop offset="0" stop-color="#2a9ae8"/><stop offset="1" stop-color="#38c860"/></linearGradient><linearGradient id="cp2" x1="0" y1="0" x2="1" y2="1"><stop offset="0" stop-color="#8a5ae0"/><stop offset="1" stop-color="#e85ab8"/></linearGradient></defs><path d="M6 2 H15 Q18 2 19 5 L21 11 H13 Q10 11 9 14 L7 20 Q6 23 3.5 22 Q1.5 21 2 18 L4 6 Q4.5 2 6 2 Z" fill="url(#cp1)"/><path d="M13 8 H22 Q24.5 8 25 11 L25 17 Q25 21 22 21 H14 Q11 21 12 17 L13.5 11 Q14 8 13 8 Z" fill="url(#cp2)"/><rect x="10" y="16" width="16" height="9" rx="1.5" fill="#f4c020"/><text x="11.5" y="23.5" font-family="Liberation Sans" font-weight="bold" font-size="7" fill="#333">PRE</text></svg>
</body></html>
